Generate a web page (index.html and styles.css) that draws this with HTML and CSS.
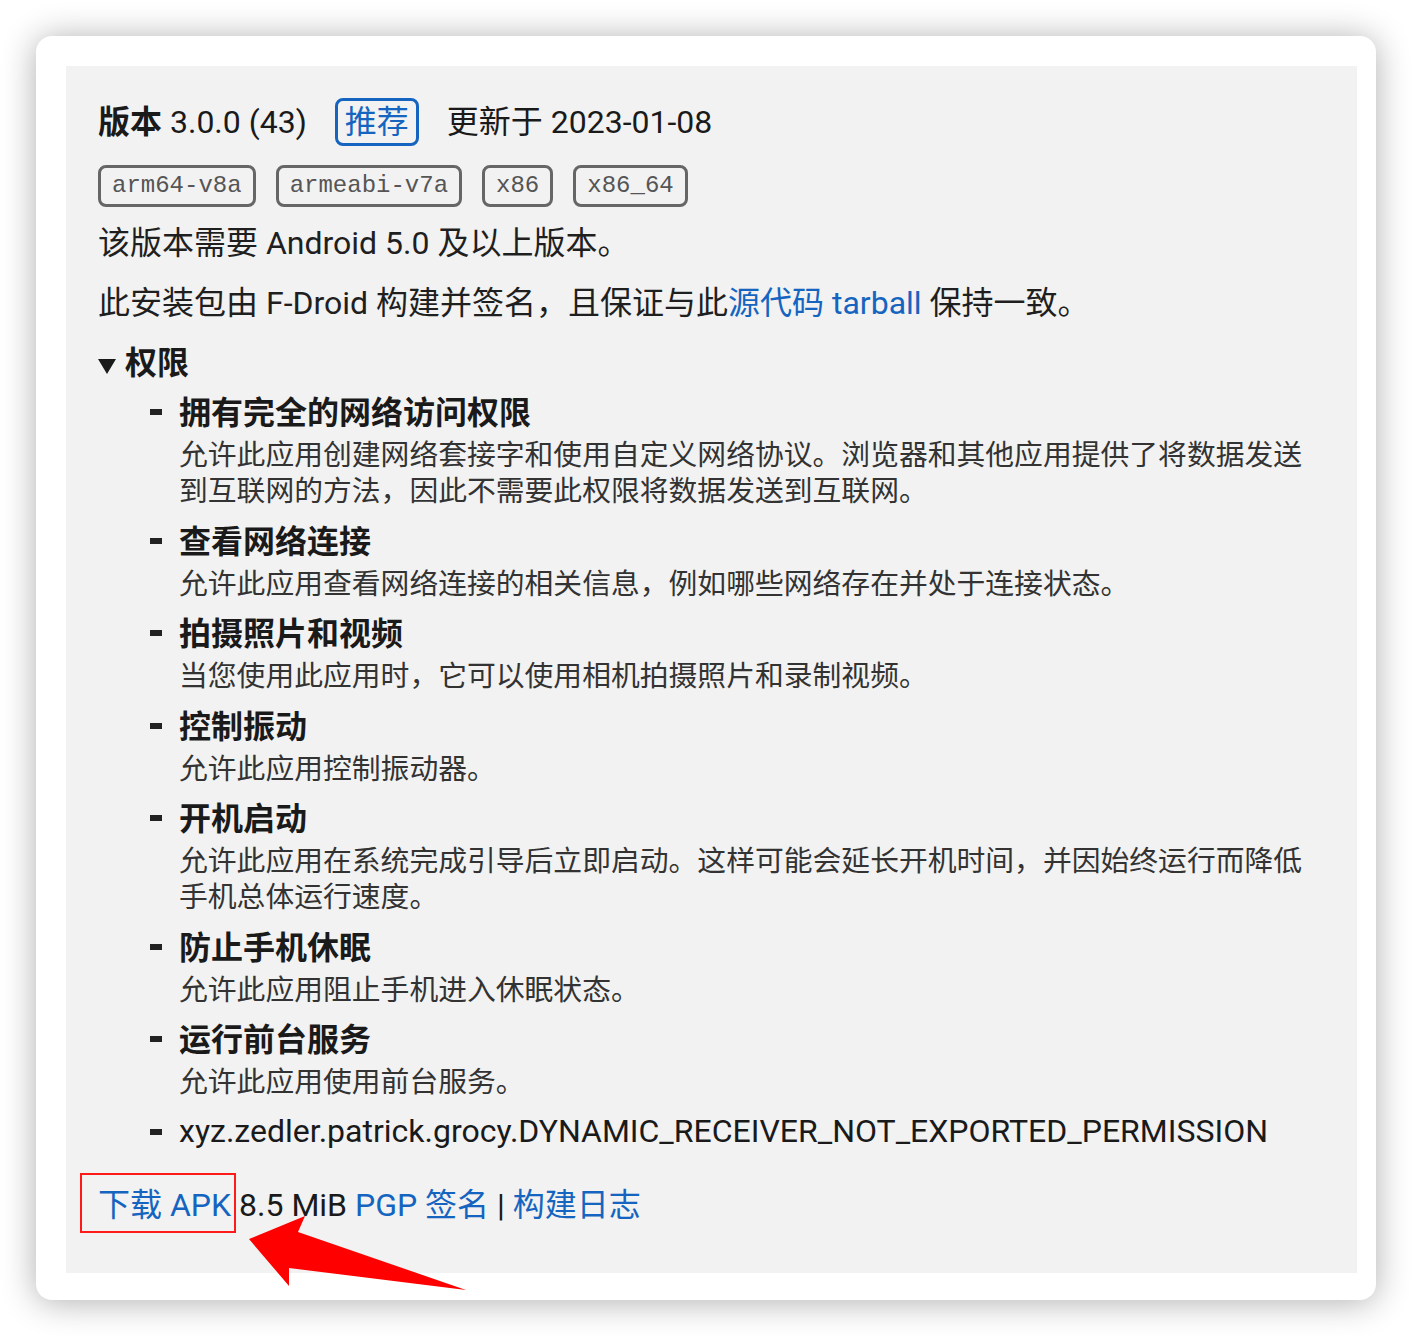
FILE: index.html
```html
<!DOCTYPE html>
<html lang="zh-CN">
<head>
<meta charset="utf-8">
<title>版本 3.0.0</title>
<link rel="stylesheet" href="styles.css">
</head>
<body>
<div class="card">
  <div class="panel">
    <div class="version-head">
      <span><b class="label">版本</b> 3.0.0 (43)</span>
      <span class="badge">推荐</span>
      <span>更新于 2023-01-08</span>
    </div>
    <div class="archs">
      <span class="arch">arm64-v8a</span>
      <span class="arch">armeabi-v7a</span>
      <span class="arch">x86</span>
      <span class="arch">x86_64</span>
    </div>
    <p class="para">该版本需要 Android 5.0 及以上版本。</p>
    <p class="para">此安装包由 F-Droid 构建并签名，且保证与此<a class="link" href="#">源代码 tarball</a> 保持一致。</p>
    <div class="perms">
      <div class="perms-summary"><span class="tri"></span><b>权限</b></div>
      <ul class="perm-list">
        <li class="perm"><span class="dash-col"><span class="dash"></span></span><div class="perm-body"><div class="perm-title">拥有完全的网络访问权限</div><div class="perm-desc">允许此应用创建网络套接字和使用自定义网络协议。浏览器和其他应用提供了将数据发送到互联网的方法，因此不需要此权限将数据发送到互联网。</div></div></li>
        <li class="perm"><span class="dash-col"><span class="dash"></span></span><div class="perm-body"><div class="perm-title">查看网络连接</div><div class="perm-desc">允许此应用查看网络连接的相关信息，例如哪些网络存在并处于连接状态。</div></div></li>
        <li class="perm"><span class="dash-col"><span class="dash"></span></span><div class="perm-body"><div class="perm-title">拍摄照片和视频</div><div class="perm-desc">当您使用此应用时，它可以使用相机拍摄照片和录制视频。</div></div></li>
        <li class="perm"><span class="dash-col"><span class="dash"></span></span><div class="perm-body"><div class="perm-title">控制振动</div><div class="perm-desc">允许此应用控制振动器。</div></div></li>
        <li class="perm"><span class="dash-col"><span class="dash"></span></span><div class="perm-body"><div class="perm-title">开机启动</div><div class="perm-desc">允许此应用在系统完成引导后立即启动。这样可能会延长开机时间，并因始终运行而降低手机总体运行速度。</div></div></li>
        <li class="perm"><span class="dash-col"><span class="dash"></span></span><div class="perm-body"><div class="perm-title">防止手机休眠</div><div class="perm-desc">允许此应用阻止手机进入休眠状态。</div></div></li>
        <li class="perm"><span class="dash-col"><span class="dash"></span></span><div class="perm-body"><div class="perm-title">运行前台服务</div><div class="perm-desc">允许此应用使用前台服务。</div></div></li>
        <li class="perm"><span class="dash-col"><span class="dash"></span></span><div class="perm-body"><div class="perm-title plain">xyz.zedler.patrick.grocy.DYNAMIC_RECEIVER_NOT_EXPORTED_PERMISSION</div></div></li>
      </ul>
    </div>
    <div class="downloads">
      <a class="link download" href="#">下载 APK</a> 8.5 MiB <a class="link" href="#">PGP 签名</a> | <a class="link" href="#">构建日志</a>
    </div>
  </div>
  <svg class="arrow" width="230" height="90" viewBox="0 0 230 90" xmlns="http://www.w3.org/2000/svg">
    <polygon points="3,27 59,4 52,20 220,78 43,56 43,74" fill="#ff0000"/>
  </svg>
</div>
</body>
</html>
```
FILE: styles.css
```css
html, body {
  margin: 0;
  padding: 0;
  background: #ffffff;
}

body {
  font-family: "Roboto", "Noto Sans CJK SC", sans-serif;
  color: #1a1a1a;
}

.card {
  position: relative;
  margin: 36px;
  width: 1340px;
  height: 1264px;
  box-sizing: border-box;
  padding: 30px 19px 27px 30px;
  background: #ffffff;
  border-radius: 16px;
  box-shadow: 0 2px 34px rgba(0, 0, 0, 0.32);
}

.panel {
  background: #f2f2f2;
  height: 100%;
  box-sizing: border-box;
  padding: 32px 32px 40px 32px;
  font-size: 32px;
}

.version-head {
  display: flex;
  align-items: center;
  gap: 28px;
  height: 48px;
  line-height: 48px;
}

.label {
  font-weight: 700;
}

.badge {
  box-sizing: border-box;
  height: 48px;
  line-height: 42px;
  padding: 0 7px;
  border: 3px solid #1565c0;
  border-radius: 8px;
  color: #1565c0;
}

.archs {
  display: flex;
  gap: 20px;
  margin-top: 19px;
}

.arch {
  font-family: "Liberation Mono", "DejaVu Sans Mono", monospace;
  font-size: 24px;
  line-height: 36px;
  padding: 0 11px;
  border: 3px solid #666666;
  border-radius: 8px;
  color: #555555;
}

.para {
  margin: 14px 0 16px;
  line-height: 44px;
  color: #1f1f1f;
}

.para + .para {
  margin-top: 0;
}

.link {
  color: #1565c0;
  text-decoration: none;
}

.perms-summary {
  display: flex;
  align-items: center;
  height: 44px;
  line-height: 44px;
}

.tri {
  width: 0;
  height: 0;
  border-left: 9px solid transparent;
  border-right: 9px solid transparent;
  border-top: 15px solid #1a1a1a;
  margin: 6px 9px 0 0;
}

.perm-list {
  list-style: none;
  margin: 4px 0 0;
  padding: 0;
}

.perm {
  display: flex;
  margin-bottom: 8.5px;
}

.perm:last-child {
  margin-bottom: 0;
}

.dash-col {
  flex: 0 0 81px;
  height: 48px;
  display: flex;
  align-items: center;
  justify-content: flex-end;
  padding-right: 17px;
  box-sizing: border-box;
}

.dash {
  width: 12px;
  height: 6px;
  background: #222222;
  margin-top: -2px;
}

.perm-body {
  flex: 1;
  min-width: 0;
}

.perm-title {
  font-weight: 700;
  line-height: 48px;
  color: #1a1a1a;
}

.perm-title.plain {
  font-weight: 400;
  line-height: 44px;
}

.perm-desc {
  font-size: 28.8px;
  line-height: 36px;
  color: #333333;
}

.downloads {
  margin-top: 26px;
  line-height: 44px;
  color: #1a1a1a;
}

.download {
  position: relative;
}

.download::after {
  content: "";
  position: absolute;
  left: -18px;
  right: -5px;
  top: -13px;
  bottom: -9px;
  border: 2px solid #ff1a1a;
}

.arrow {
  position: absolute;
  left: 210px;
  top: 1176px;
  pointer-events: none;
}
```
